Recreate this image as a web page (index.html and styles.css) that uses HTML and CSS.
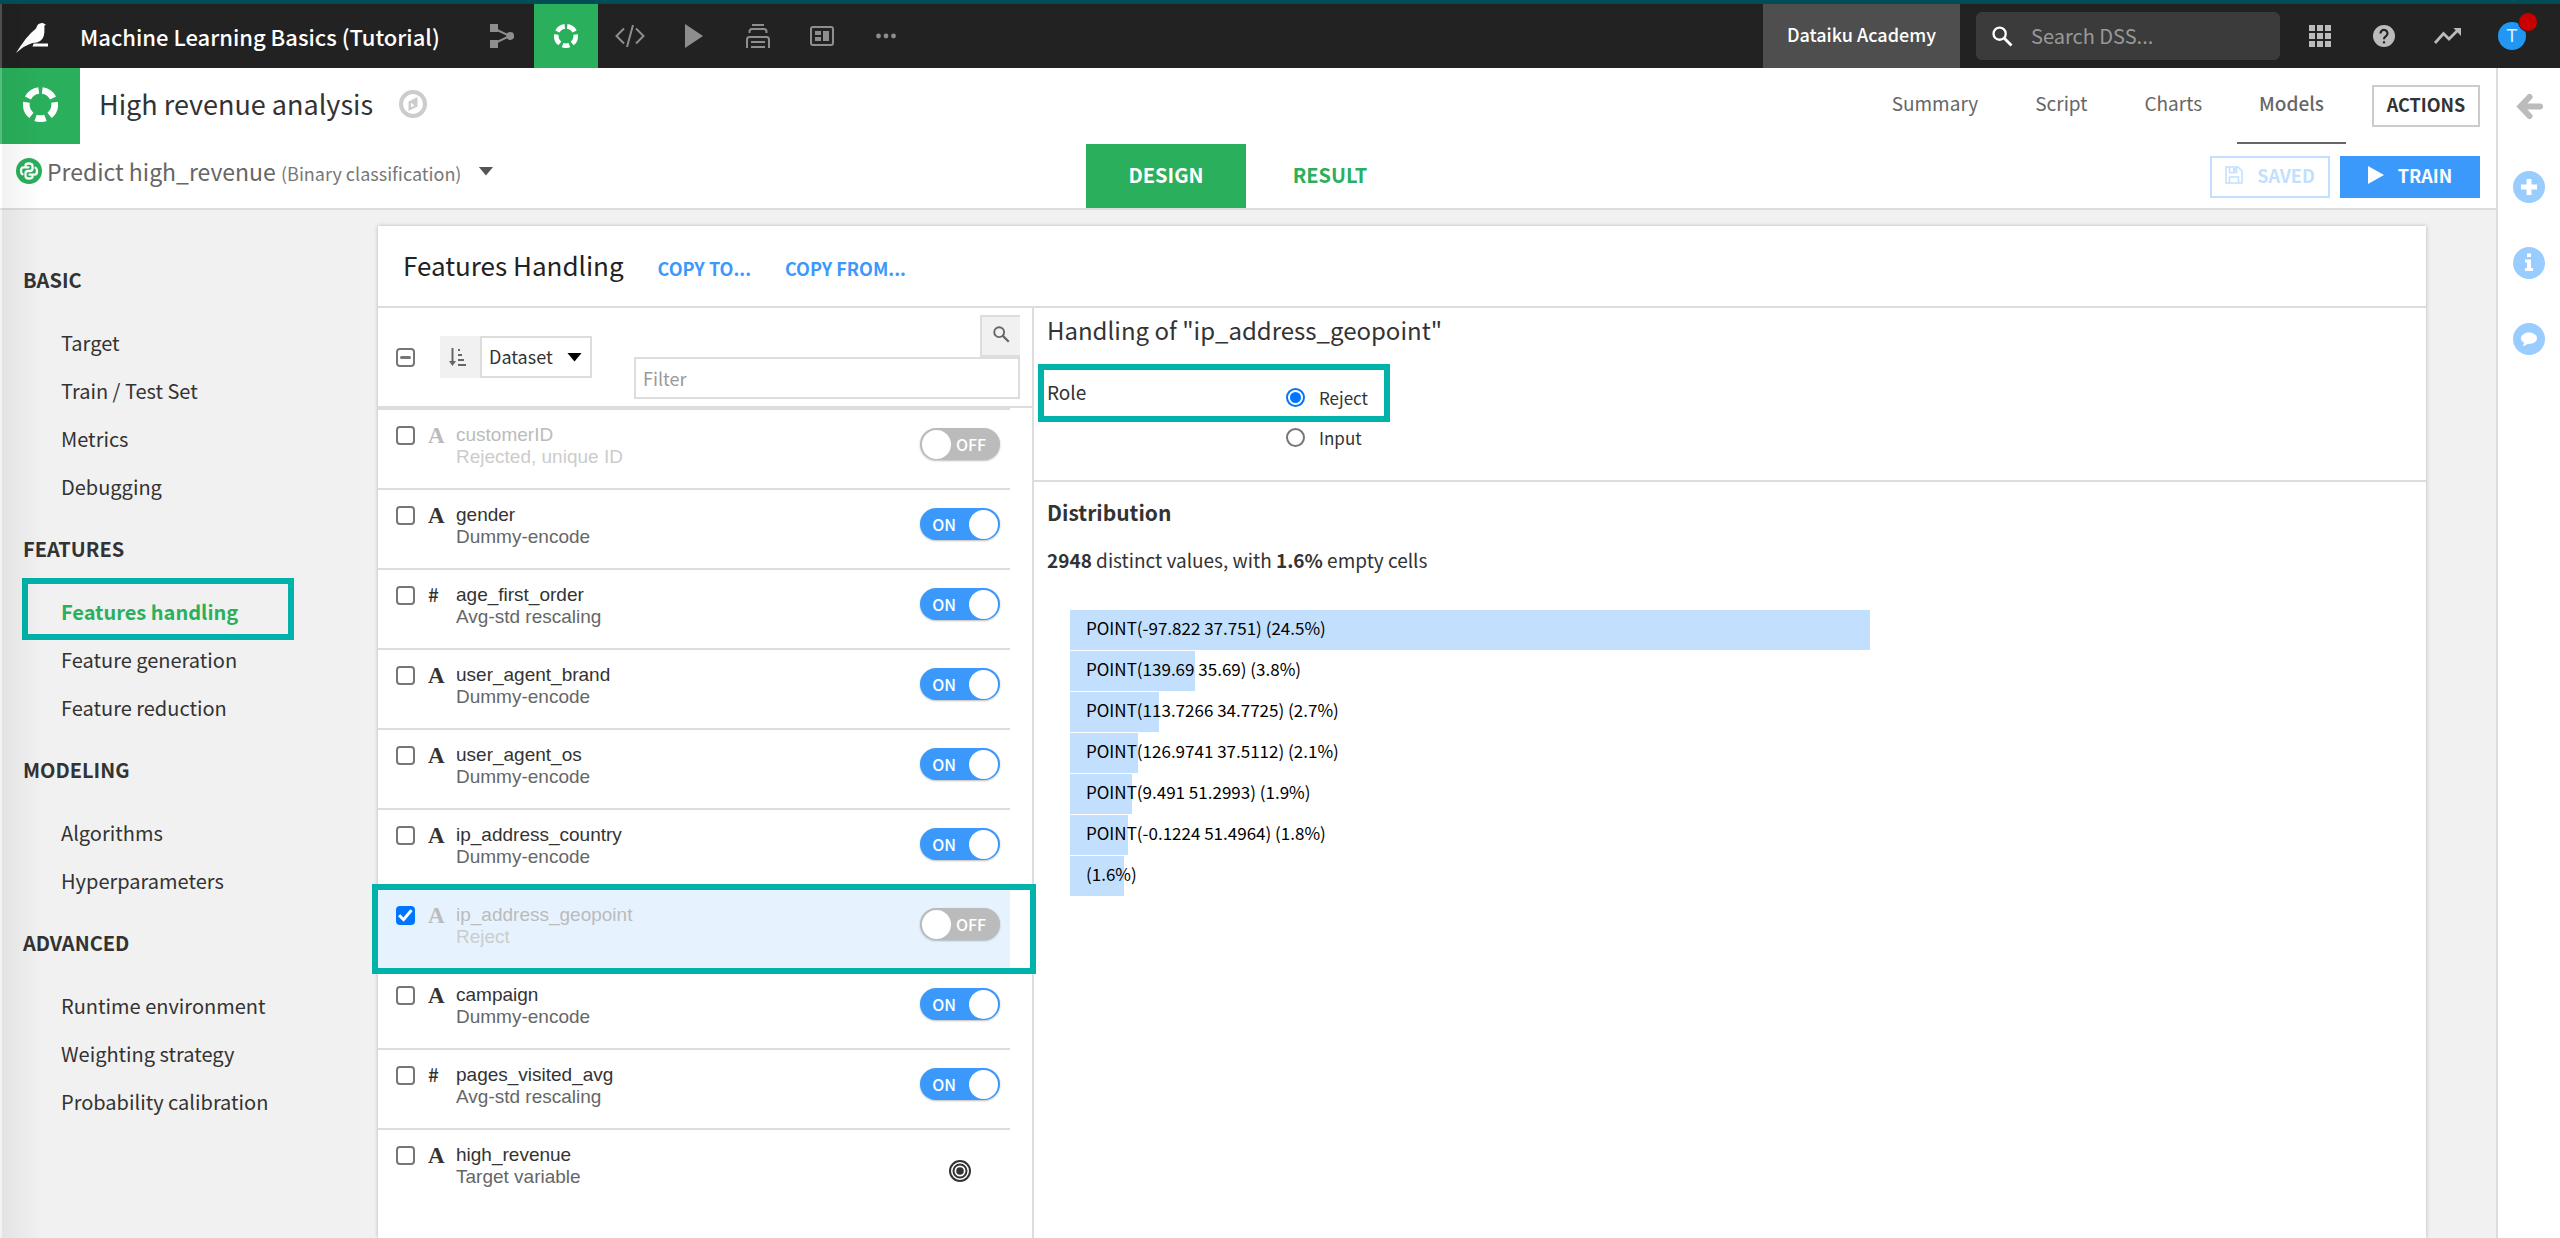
FILE: index.html
```
<!DOCTYPE html>
<html lang="en">
<head>
<meta charset="utf-8">
<title>High revenue analysis - Models</title>
<meta name="viewport" content="width=device-width, initial-scale=1">
<link rel="stylesheet" href="styles.css">
</head>
<body>
<svg class="sprite" aria-hidden="true">
  <symbol id="i-lab" viewBox="0 0 24 24"><path fill="none" stroke="currentColor" stroke-width="4.600" d="M13.200 2.370A9.700 9.700 0 0 1 20.600 7.500M21.620 10.500A9.700 9.700 0 0 1 18.200 19.500M15.400 21.100A9.700 9.700 0 0 1 8.600 21.100M5.800 19.500A9.700 9.700 0 0 1 2.380 10.500M3.400 7.500A9.700 9.700 0 0 1 10.800 2.370"/></symbol>
  <symbol id="i-play" viewBox="0 0 18 24"><path fill="currentColor" d="M0 0L18 12L0 24Z"/></symbol>
  <symbol id="i-search" viewBox="0 0 22 22"><circle cx="8" cy="8" r="6.400" fill="none" stroke="currentColor" stroke-width="2.400"/><path d="M12.600 12.600L20.400 20.400" stroke="currentColor" stroke-width="3"/></symbol>
</svg>

<header class="topbar">
  <a class="topbar-logo" href="#" aria-label="Home">
    <svg width="32" height="30" viewBox="0 0 32 30"><path fill="#fff" d="M22 1.600Q23.500 0 26 0Q28 .2 28.400 1L30 1.800L28.300 2.800Q28.600 6 28.300 10Q28 17 21 19.600L16.500 20Q9 22 0 30Q4 23.500 10 15.500Q15.500 9 20 5.500Q20.800 3 22 1.600Z"/><path fill="#fff" d="M17.600 20.400H32V23.600H16.500Z"/></svg>
  </a>
  <a class="topbar-project" href="#">Machine Learning Basics (Tutorial)</a>
  <nav class="topbar-nav" aria-label="Project">
    <a class="topbar-cell" href="#" aria-label="Flow"><svg width="24" height="24" viewBox="0 0 24 24" fill="currentColor"><path d="M0 0H8V8H0ZM0 16H8V24H0Z"/><path d="M5 5L20 12L5 19" fill="none" stroke="currentColor" stroke-width="2"/><circle cx="20.300" cy="12" r="3.900"/></svg></a>
    <a class="topbar-cell topbar-cell--active" href="#" aria-label="Visual analyses"><svg width="24" height="24"><use href="#i-lab"/></svg></a>
    <a class="topbar-cell" href="#" aria-label="Code"><svg width="30" height="22" viewBox="0 0 30 22" fill="none" stroke="currentColor" stroke-width="2"><path d="M9 3.500L1.500 11L9 18.500M21 3.500L28.500 11L21 18.500M18 0L12 22"/></svg></a>
    <a class="topbar-cell" href="#" aria-label="Jobs"><svg width="18" height="24"><use href="#i-play"/></svg></a>
    <a class="topbar-cell" href="#" aria-label="Automation"><svg width="24" height="24" viewBox="0 0 24 24" fill="none" stroke="currentColor" stroke-width="2"><path d="M6 1H18M3.500 9V7.500Q3.500 5 6 5H18Q20.500 5 20.500 7.500V9M1 24V15.500Q1 13 3.500 13H20.500Q23 13 23 15.500V24M5 18H19M5 23H19"/></svg></a>
    <a class="topbar-cell" href="#" aria-label="Dashboards"><svg width="24" height="20" viewBox="0 0 24 20" fill="currentColor"><rect x="1" y="1" width="22" height="18" rx="2" fill="none" stroke="currentColor" stroke-width="2"/><path d="M5 5H11V9H5ZM5 11H11V15H5ZM13 5H19V15H13Z"/></svg></a>
    <a class="topbar-cell" href="#" aria-label="More"><svg width="20" height="6" viewBox="0 0 20 6" fill="currentColor"><circle cx="2.500" cy="3" r="2.400"/><circle cx="10" cy="3" r="2.400"/><circle cx="17.500" cy="3" r="2.400"/></svg></a>
  </nav>
  <a class="topbar-academy" href="#">Dataiku Academy</a>
  <label class="topbar-search">
    <svg width="21" height="21"><use href="#i-search"/></svg>
    <input type="search" placeholder="Search DSS..." aria-label="Search DSS">
  </label>
  <nav class="topbar-tools" aria-label="Account">
    <a class="topbar-cell" href="#" aria-label="Applications"><svg width="22" height="22" viewBox="0 0 22 22" fill="currentColor"><path d="M0 0H6V6H0ZM8 0H14V6H8ZM16 0H22V6H16ZM0 8H6V14H0ZM8 8H14V14H8ZM16 8H22V14H16ZM0 16H6V22H0ZM8 16H14V22H8ZM16 16H22V22H16Z"/></svg></a>
    <a class="topbar-cell" href="#" aria-label="Help"><svg width="22" height="22" viewBox="0 0 22 22"><circle cx="11" cy="11" r="11" fill="currentColor"/><path d="M7.500 8.500A3.500 3.500 0 1 1 13 11.200Q11 12.600 11 14.300" fill="none" stroke="#222" stroke-width="2.200"/><path d="M9.900 16.200H12.100V18.400H9.900Z" fill="#222"/></svg></a>
    <a class="topbar-cell" href="#" aria-label="Activity"><svg width="28" height="18" viewBox="0 0 28 18"><path d="M1 16L9.500 6.500L15 12L24 3" fill="none" stroke="currentColor" stroke-width="2.800"/><path d="M19.500 1H27V9Z" fill="currentColor"/></svg></a>
    <a class="topbar-cell" href="#" aria-label="Profile"><span class="avatar">T<span class="avatar-badge"></span></span></a>
  </nav>
</header>

<div class="shell">
  <div class="page">
    <header class="analysis">
      <span class="analysis-icon"><svg width="35" height="35"><use href="#i-lab"/></svg></span>
      <h1 class="analysis-title">High revenue analysis</h1>
      <svg class="analysis-compass" width="28" height="28" viewBox="0 0 28 28"><circle cx="14" cy="14" r="12" fill="none" stroke="#ccc" stroke-width="4"/><path fill="#ccc" fill-rule="evenodd" d="M18.500 7V16.500L9.500 21V11.500ZM12 12.800V17.300L15.500 15.500Z"/></svg>
      <nav class="analysis-tabs" aria-label="Analysis">
        <a class="analysis-tab" href="#">Summary</a>
        <a class="analysis-tab" href="#">Script</a>
        <a class="analysis-tab" href="#">Charts</a>
        <a class="analysis-tab analysis-tab--active" href="#">Models</a>
      </nav>
      <button class="btn btn--actions" type="button">ACTIONS</button>
    </header>

    <div class="task">
      <button class="task-picker" type="button">
        <svg width="26" height="26" viewBox="0 0 26 26"><circle cx="13" cy="13" r="13" fill="#2ab05c"/><path fill="none" stroke="#fff" stroke-width="2.300" stroke-linejoin="round" stroke-linecap="round" d="M9.500 7.500Q9.500 5.500 13 5.500Q16.500 5.500 16.500 8V10.500Q16.500 13 14 13H12Q9.500 13 9.500 15.500V18Q9.500 20.500 13 20.500Q16.500 20.500 16.500 18.500M12.500 9.300H7.500Q5 9.300 5 12.800Q5 15.500 6.500 16.300M13.500 16.700H18.500Q21 16.700 21 13.200Q21 10.500 19.500 9.700"/></svg>
        <span>Predict high_revenue <small class="task-kind">(Binary classification)</small></span>
        <span class="caret"></span>
      </button>
      <nav class="task-modes" aria-label="Model view">
        <a class="task-mode task-mode--active" href="#">DESIGN</a>
        <a class="task-mode" href="#">RESULT</a>
      </nav>
      <div class="task-buttons">
        <button class="btn btn--saved" type="button" disabled><svg width="18" height="18" viewBox="0 0 18 18" fill="none" stroke="currentColor" stroke-width="1.500"><path d="M1 1H13L17 5V17H1ZM4.500 1V6.500H11.500V1M4.500 17V11H13.500V17"/><path fill="currentColor" d="M8 2H10.500V5.500H8Z" stroke="none"/></svg>SAVED</button>
        <button class="btn btn--train" type="button"><svg width="16" height="18" viewBox="0 0 18 24" preserveAspectRatio="none"><path fill="currentColor" d="M0 0L18 12L0 24Z"/></svg>TRAIN</button>
      </div>
    </div>

    <div class="workspace">
      <nav class="sidebar" aria-label="Model settings">
        <h2 class="sidebar-heading">BASIC</h2>
        <ul class="sidebar-list">
          <li><a href="#">Target</a></li>
          <li><a href="#">Train / Test Set</a></li>
          <li><a href="#">Metrics</a></li>
          <li><a href="#">Debugging</a></li>
        </ul>
        <h2 class="sidebar-heading">FEATURES</h2>
        <ul class="sidebar-list">
          <li class="sidebar-current"><a href="#">Features handling</a><span class="callout"></span></li>
          <li><a href="#">Feature generation</a></li>
          <li><a href="#">Feature reduction</a></li>
        </ul>
        <h2 class="sidebar-heading">MODELING</h2>
        <ul class="sidebar-list">
          <li><a href="#">Algorithms</a></li>
          <li><a href="#">Hyperparameters</a></li>
        </ul>
        <h2 class="sidebar-heading">ADVANCED</h2>
        <ul class="sidebar-list">
          <li><a href="#">Runtime environment</a></li>
          <li><a href="#">Weighting strategy</a></li>
          <li><a href="#">Probability calibration</a></li>
        </ul>
      </nav>

      <main class="card">
        <header class="card-header">
          <h2 class="card-title">Features Handling</h2>
          <a class="card-link" href="#">COPY TO...</a>
          <a class="card-link" href="#">COPY FROM...</a>
        </header>
        <div class="card-body">
          <section class="features" aria-label="Features">
            <div class="toolbar">
              <input class="check check--mixed" type="checkbox" aria-label="Select all">
              <div class="sort">
                <button class="sort-direction" type="button" aria-label="Sort direction"><svg width="18" height="18" viewBox="0 0 18 18" fill="none" stroke="currentColor" stroke-width="2"><path d="M3.500 0V15"/><path d="M0 13H7L3.500 18Z" fill="currentColor" stroke="none"/><path d="M9 2H11M9 7H13M9 12H15M9 17H17"/></svg></button>
                <div class="sort-field">
                  <select aria-label="Sort by"><option>Dataset</option></select>
                  <span class="caret caret--black"></span>
                </div>
              </div>
              <div class="filter">
                <button class="filter-button" type="button" aria-label="Search"><svg width="17" height="17" viewBox="0 0 22 22"><circle cx="8" cy="8" r="6.400" fill="none" stroke="currentColor" stroke-width="2.400"/><path d="M12.600 12.600L20.400 20.400" stroke="currentColor" stroke-width="3"/></svg></button>
                <input class="filter-input" type="text" placeholder="Filter" aria-label="Filter features">
              </div>
            </div>
            <ul class="feature-list">
              <li class="feature feature--off"><input class="check" type="checkbox" id="f0"><span class="feature-type">A</span><label class="feature-name" for="f0">customerID<small>Rejected, unique ID</small></label><button class="toggle" type="button" role="switch" aria-checked="false">OFF</button></li>
              <li class="feature"><input class="check" type="checkbox" id="f1"><span class="feature-type">A</span><label class="feature-name" for="f1">gender<small>Dummy-encode</small></label><button class="toggle toggle--on" type="button" role="switch" aria-checked="true">ON</button></li>
              <li class="feature"><input class="check" type="checkbox" id="f2"><span class="feature-type feature-type--num">#</span><label class="feature-name" for="f2">age_first_order<small>Avg-std rescaling</small></label><button class="toggle toggle--on" type="button" role="switch" aria-checked="true">ON</button></li>
              <li class="feature"><input class="check" type="checkbox" id="f3"><span class="feature-type">A</span><label class="feature-name" for="f3">user_agent_brand<small>Dummy-encode</small></label><button class="toggle toggle--on" type="button" role="switch" aria-checked="true">ON</button></li>
              <li class="feature"><input class="check" type="checkbox" id="f4"><span class="feature-type">A</span><label class="feature-name" for="f4">user_agent_os<small>Dummy-encode</small></label><button class="toggle toggle--on" type="button" role="switch" aria-checked="true">ON</button></li>
              <li class="feature"><input class="check" type="checkbox" id="f5"><span class="feature-type">A</span><label class="feature-name" for="f5">ip_address_country<small>Dummy-encode</small></label><button class="toggle toggle--on" type="button" role="switch" aria-checked="true">ON</button></li>
              <li class="feature feature--off feature--selected"><input class="check" type="checkbox" id="f6" checked><span class="feature-type">A</span><label class="feature-name" for="f6">ip_address_geopoint<small>Reject</small></label><button class="toggle" type="button" role="switch" aria-checked="false">OFF</button><span class="callout"></span></li>
              <li class="feature"><input class="check" type="checkbox" id="f7"><span class="feature-type">A</span><label class="feature-name" for="f7">campaign<small>Dummy-encode</small></label><button class="toggle toggle--on" type="button" role="switch" aria-checked="true">ON</button></li>
              <li class="feature"><input class="check" type="checkbox" id="f8"><span class="feature-type feature-type--num">#</span><label class="feature-name" for="f8">pages_visited_avg<small>Avg-std rescaling</small></label><button class="toggle toggle--on" type="button" role="switch" aria-checked="true">ON</button></li>
              <li class="feature"><input class="check" type="checkbox" id="f9"><span class="feature-type">A</span><label class="feature-name" for="f9">high_revenue<small>Target variable</small></label><span class="feature-target"><svg width="22" height="22" viewBox="0 0 22 22" fill="none" stroke="#333" stroke-width="2"><circle cx="11" cy="11" r="10"/><circle cx="11" cy="11" r="6.500"/><circle cx="11" cy="11" r="3.800" fill="#333" stroke="none"/></svg></span></li>
            </ul>
          </section>

          <section class="detail" aria-label="Feature detail">
            <div class="handling">
              <h3 class="handling-title">Handling of "ip_address_geopoint"</h3>
              <div class="role" role="radiogroup" aria-labelledby="role-label">
                <span class="role-label" id="role-label">Role</span>
                <div>
                  <label class="role-option"><input class="radio" type="radio" name="role" checked>Reject</label>
                  <label class="role-option"><input class="radio" type="radio" name="role">Input</label>
                </div>
                <span class="callout"></span>
              </div>
            </div>
            <div class="distribution">
              <h3 class="distribution-title">Distribution</h3>
              <p class="distribution-summary"><b>2948</b> distinct values, with <b>1.6%</b> empty cells</p>
              <ul class="bars">
                <li><span class="bar" style="width:100%"></span><span class="bar-label">POINT(-97.822 37.751) (24.5%)</span></li>
                <li><span class="bar" style="width:15.6%"></span><span class="bar-label">POINT(139.69 35.69) (3.8%)</span></li>
                <li><span class="bar" style="width:11.1%"></span><span class="bar-label">POINT(113.7266 34.7725) (2.7%)</span></li>
                <li><span class="bar" style="width:8.5%"></span><span class="bar-label">POINT(126.9741 37.5112) (2.1%)</span></li>
                <li><span class="bar" style="width:7.7%"></span><span class="bar-label">POINT(9.491 51.2993) (1.9%)</span></li>
                <li><span class="bar" style="width:7.2%"></span><span class="bar-label">POINT(-0.1224 51.4964) (1.8%)</span></li>
                <li><span class="bar" style="width:6.7%"></span><span class="bar-label">(1.6%)</span></li>
              </ul>
            </div>
          </section>
        </div>
      </main>
    </div>
  </div>

  <aside class="rail" aria-label="Panels">
    <button type="button" aria-label="Open panel"><svg width="32" height="32" viewBox="0 0 32 32"><path d="M27 16.500H9M16.500 7L7.500 16.500L16.500 26" fill="none" stroke="#bbb" stroke-width="6" stroke-linecap="round" stroke-linejoin="miter"/></svg></button>
    <button type="button" aria-label="Add"><svg width="32" height="32" viewBox="0 0 32 32"><circle cx="16" cy="16" r="16" fill="#9cf"/><path d="M16 8V24M8 16H24" stroke="#fff" stroke-width="5"/></svg></button>
    <button type="button" aria-label="Details"><svg width="32" height="32" viewBox="0 0 32 32"><circle cx="16" cy="16" r="16" fill="#9cf"/><path fill="#fff" d="M14 6.500H18V10H14ZM12 12.500H18V21H20V24H12V21H14V15.500H12Z"/></svg></button>
    <button type="button" aria-label="Discussions"><svg width="32" height="32" viewBox="0 0 32 32"><circle cx="16" cy="16" r="16" fill="#9cf"/><path fill="#fff" d="M16 9.500C20.500 9.500 24 12 24 15.300S20.500 21 16 21L14.500 20.900Q12.500 22.700 9.500 23Q10.800 21.500 11 19.800C9 18.700 8 17.200 8 15.300C8 12 11.500 9.500 16 9.500Z"/></svg></button>
  </aside>
</div>
</body>
</html>
```
FILE: styles.css
```
* { box-sizing: border-box; }

body {
  margin: 0;
  min-height: 100vh;
  display: flex;
  flex-direction: column;
  background: #fff;
  color: #333;
  font-family: "Noto Sans CJK SC", "Open Sans", sans-serif;
  font-size: 18px;
}

/* soft shade along the window's left edge */
body::after {
  content: "";
  position: fixed;
  inset: 4px auto 0 0;
  width: 44px;
  pointer-events: none;
  background: linear-gradient(to right, rgba(255, 255, 255, .2) 2px, rgba(0, 0, 0, .05) 2px, transparent);
}

h1, h2, h3, p, ul { margin: 0; padding: 0; font-weight: 400; }
ul { list-style: none; }
a { color: inherit; text-decoration: none; }
button, input, select { font: inherit; color: inherit; margin: 0; padding: 0; border: 0; background: none; border-radius: 0; outline: 0; }
svg { display: block; flex: none; }
.sprite { position: absolute; width: 0; height: 0; }

.callout {
  position: absolute;
  border: 6px solid #00b2a9;
  pointer-events: none;
}

.caret {
  width: 15px;
  height: 9px;
  background: #555;
  clip-path: polygon(0 0, 100% 0, 50% 100%);
}
.caret--black { background: #000; }

/* top bar */
.topbar {
  display: flex;
  align-items: center;
  height: 68px;
  padding: 0 16px;
  border-top: 4px solid #004e55;
  background: #222;
  color: #fff;
}
.topbar-logo { width: 64px; padding-top: 4px; }
.topbar-project { font-size: 22px; font-weight: 500; white-space: nowrap; margin-right: 30px; }
.topbar-nav, .topbar-tools { display: flex; }
.topbar-nav { margin-right: auto; color: #8e8e8e; }
.topbar-tools { color: #bbb; }
.topbar-cell { display: flex; align-items: center; justify-content: center; width: 64px; height: 64px; }
.topbar-cell--active { background: #2ab05c; color: #fff; }
.topbar-academy {
  height: 64px;
  padding: 0 24px;
  line-height: 60px;
  background: #4e4e4e;
  font-weight: 500;
}
.topbar-search {
  display: flex;
  align-items: center;
  gap: 18px;
  width: 304px;
  height: 48px;
  margin: 0 8px 0 16px;
  padding: 0 16px;
  border-radius: 6px;
  background: #3b3b3b;
}
.topbar-search input { flex: 1; min-width: 0; font-size: 20px; line-height: 30px; }
.topbar-search input::placeholder { color: #999; opacity: 1; }
.avatar {
  position: relative;
  width: 28px;
  height: 28px;
  border-radius: 50%;
  background: #2196f3;
  font: 19px/28px Roboto, sans-serif;
  text-align: center;
  color: #dbeeff;
}
.avatar-badge {
  position: absolute;
  top: -10px;
  right: -12px;
  width: 20px;
  height: 20px;
  border: 1px solid #222;
  border-radius: 50%;
  background: #c90000;
}

.shell { display: flex; flex: 1; }
.page { display: flex; flex-direction: column; flex: 1; min-width: 0; }

.btn {
  display: flex;
  align-items: center;
  justify-content: center;
  gap: 14px;
  height: 42px;
  font-weight: 700;
  line-height: 30px;
  padding-bottom: 4px;
}

/* analysis header */
.analysis { display: flex; align-items: center; height: 76px; padding-right: 16px; }
.analysis-icon { display: flex; align-items: center; justify-content: center; width: 80px; height: 76px; padding-bottom: 4px; background: #2ab05c; color: #fff; }
.analysis-title { font-size: 27px; line-height: 72px; padding: 0 26px 4px 19px; }
.analysis-compass { margin-bottom: 4px; }
.analysis-tabs { display: flex; gap: 13px; margin: 0 26px 0 auto; font-size: 19px; line-height: 70px; color: #666; }
.analysis-tab { height: 76px; padding: 0 22px; border-bottom: 2px solid transparent; }
.analysis-tab--active { font-weight: 500; border-color: #666; }
.btn--actions { width: 108px; border: 2px solid #ccc; }

/* model task bar */
.task {
  display: grid;
  grid-template-columns: 1fr auto 1fr;
  height: 66px;
  padding: 0 16px;
  border-bottom: 2px solid #ddd;
}
.task-picker { display: flex; align-items: center; gap: 5px; padding-bottom: 10px; font-size: 23px; color: #666; justify-self: start; white-space: nowrap; }
.task-kind { font-size: 18px; color: #777; }
.task-picker .caret { margin-left: 12px; }
.task-modes { display: flex; gap: 4px; }
.task-mode { width: 160px; text-align: center; font-size: 20px; font-weight: 700; line-height: 62px; color: #2ab05c; }
.task-mode--active { background: #2ab05c; color: #fff; }
.task-buttons { display: flex; gap: 10px; justify-content: flex-end; padding-top: 12px; }
.btn--saved { width: 120px; border: 2px solid #c2dffd; color: #c2dffd; }
.btn--train { width: 140px; background: #3b99fc; color: #fff; }

/* workspace */
.workspace { display: flex; flex: 1; background: #f1f1f1; padding-right: 70px; }
.sidebar { width: 378px; flex: none; padding-top: 46px; font-size: 20px; line-height: 48px; }
.sidebar-heading { padding-left: 23px; font-size: 20px; font-weight: 700; }
.sidebar-list { margin: 15px 0 14px; }
.sidebar-list a { display: block; padding-left: 61px; }
.sidebar-current { position: relative; font-weight: 700; color: #2ab05c; }
.sidebar-current .callout { left: 22px; top: -10px; width: 272px; height: 62px; }

.card {
  display: flex;
  flex-direction: column;
  flex: 1;
  min-width: 0;
  margin-top: 16px;
  background: #fff;
  box-shadow: 0 0 4px rgba(0, 0, 0, .25);
}
.card-header { display: flex; align-items: baseline; gap: 34px; height: 82px; padding-left: 25px; line-height: 78px; border-bottom: 2px solid #ddd; }
.card-title { font-size: 26px; color: #222; }
.card-link { font-weight: 700; color: #3b99fc; }
.card-body { display: flex; flex: 1; }

/* feature list */
.features { width: 656px; flex: none; border-right: 2px solid #ddd; }
.toolbar { display: flex; align-items: center; height: 100px; padding: 0 12px 0 18px; border-bottom: 2px solid #ddd; }

.check, .radio {
  appearance: none;
  flex: none;
  display: grid;
  place-items: center;
  width: 19px;
  height: 19px;
  border: 2px solid #767676;
  border-radius: 4px;
  background: #fff;
}
.check--mixed::before { content: ""; width: 11px; height: 3px; border-radius: 2px; background: #767676; }
.check:checked { border-color: #0075ff; background: #0075ff; }
.check:checked::before {
  content: "";
  width: 15px;
  height: 13px;
  background: #fff;
  clip-path: polygon(0 55%, 15% 40%, 36% 66%, 82% 2%, 98% 15%, 38% 98%);
}
.radio { border-radius: 50%; }
.radio:checked { border-color: #0075ff; }
.radio:checked::before { content: ""; width: 11px; height: 11px; border-radius: 50%; background: #0075ff; }

.sort { display: flex; margin-left: 25px; }
.sort-direction { display: flex; align-items: center; justify-content: center; width: 40px; height: 42px; padding-right: 4px; background: #f1f1f1; color: #666; }
.sort-field { display: grid; align-items: center; width: 112px; }
.sort-field > * { grid-area: 1 / 1; }
.sort-field select { appearance: none; height: 42px; padding: 0 7px 3px; border: 2px solid #ddd; background: #fff; }
.sort-field .caret { justify-self: end; margin-right: 10px; pointer-events: none; }

.filter { display: flex; flex-direction: column; align-items: flex-end; flex: 1; margin-left: 42px; }
.filter-button { display: flex; align-items: center; justify-content: center; width: 40px; height: 42px; padding-bottom: 4px; border: solid #ddd; border-width: 2px 0 2px 2px; background: #f1f1f1; color: #666; }
.filter-input { width: 100%; height: 42px; padding: 0 7px 1px; border: 2px solid #ddd; }
.filter-input::placeholder { color: #999; opacity: 1; }

.feature-list { width: 632px; border-top: 2px solid #ddd; }
.feature { position: relative; display: flex; align-items: flex-start; height: 80px; padding: 14px 10px 0 18px; border-bottom: 2px solid #ddd; }
.feature:last-child { border-bottom: 0; }
.feature .check { margin-top: 2px; }
.feature-type { width: 28px; margin-left: 13px; font: 700 23px/24px "Liberation Serif", serif; }
.feature-type--num { font: 500 19px/20px "Noto Sans CJK SC", sans-serif; }
.feature-name { flex: 1; font: 19px/22px "Liberation Sans", sans-serif; }
.feature-name small { display: block; font-size: 19px; color: #666; }
.feature--off, .feature--off small { color: #bbb; }
.feature--off .feature-name small { color: #ccc; }
.feature--selected { background: #e6f3ff; }
.feature--selected .callout { inset: -6px -26px -6px -6px; }
.feature-target { width: 80px; margin-top: 16px; display: flex; justify-content: center; }

.toggle {
  display: flex;
  align-items: center;
  gap: 5px;
  width: 80px;
  height: 32px;
  margin-top: 4px;
  padding: 1px 2px;
  border-radius: 16px;
  background: #bbb;
  color: #fff;
  font-size: 16px;
  font-weight: 500;
  line-height: 26px;
  box-shadow: 0 1px 2px rgba(0, 0, 0, .25);
}
.toggle::before { content: ""; width: 29px; height: 29px; border-radius: 50%; background: #fff; }
.toggle--on { flex-direction: row-reverse; gap: 13px; background: #3b99fc; }

/* feature detail */
.detail { flex: 1; min-width: 0; }
.handling { height: 174px; padding: 6px 13px 0; border-bottom: 2px solid #ddd; }
.handling-title { margin-bottom: 32px; font-size: 24px; line-height: 32px; }
.role { position: relative; display: grid; grid-template-columns: 239px 1fr; }
.role-label { font-size: 19px; line-height: 28px; }
.role-option { display: flex; align-items: center; gap: 14px; height: 40px; font-size: 17px; line-height: 24px; padding-bottom: 1px; }
.role .callout { left: -9px; top: -14px; width: 352px; height: 58px; }

.distribution { padding: 14px 13px; }
.distribution-title { margin-bottom: 18px; font-size: 21px; font-weight: 700; line-height: 32px; }
.distribution-summary { font-size: 19px; line-height: 27px; }
.bars { display: grid; gap: 1px; max-width: 800px; margin: 37px 0 0 23px; }
.bars li { display: grid; height: 40px; }
.bars li > * { grid-area: 1 / 1; }
.bar { background: #c2dffd; }
.bar-label { padding-left: 16px; font-size: 17px; line-height: 36px; color: #000; white-space: nowrap; }

/* right rail */
.rail { display: flex; flex-direction: column; align-items: center; gap: 44px; width: 64px; padding-top: 22px; border-left: 2px solid #ddd; }
.rail button:first-child { margin-bottom: 5px; }
```
